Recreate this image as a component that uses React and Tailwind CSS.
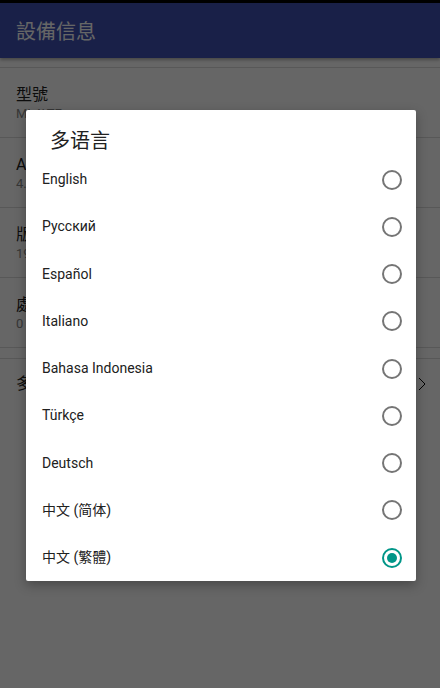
import React from "react";

const latin = { fontFamily: 'Roboto, "Noto Sans CJK TC", sans-serif' };
const sc = { fontFamily: 'Roboto, "Noto Sans CJK SC", sans-serif' };

const langs = [
  "English",
  "Русский",
  "Español",
  "Italiano",
  "Bahasa Indonesia",
  "Türkçe",
  "Deutsch",
  "中文 (简体)",
  "中文 (繁體)",
];

function Row({ title, sub }) {
  return (
    <div className="h-[70px] border-b border-[#dcdcdc] pl-4 pt-[2px] flex flex-col justify-center">
      <div className="text-[16px] leading-[20px] text-[#212121]">{title}</div>
      <div className="text-[13px] leading-[18px] text-[#8a8a8a]">{sub}</div>
    </div>
  );
}

export default function App() {
  return (
    <div className="relative w-[440px] h-[688px] overflow-hidden bg-white" style={latin}>
      <div className="h-[3px] bg-black" />
      <div className="h-[55px] bg-[#3f51b5] flex items-center pl-4 pt-[2px] shadow-[0_2px_3px_rgba(0,0,0,0.3)]">
        <span className="text-[20px] text-white">設備信息</span>
      </div>
      <div className="h-[10px] border-b border-[#dcdcdc]" />
      <Row title="型號" sub="MI 4LTE" />
      <Row title="Android 版本" sub="4.4.4" />
      <Row title="版本號" sub="19.0.1" />
      <Row title="處理器" sub="0" />
      <div className="h-[11px] border-b border-[#dcdcdc]" />
      <div className="h-[50px] flex items-center justify-between pl-4 pr-[14px]">
        <span className="text-[16px] text-[#212121]">多語言</span>
        <svg width="8" height="14" viewBox="0 0 8 14" fill="none">
          <path d="M1 1l6 6-6 6" stroke="#000" strokeWidth="1" />
        </svg>
      </div>

      <div className="absolute inset-0 bg-[rgba(0,0,0,0.6)]">
        <div className="mt-[110px] ml-[26px] w-[390px] h-[471px] bg-white rounded-[2px] shadow-[0_4px_12px_rgba(0,0,0,0.3)] flex flex-col">
          <div className="h-[46px] shrink-0 pt-[19px] pl-[24px] text-[20px] leading-[24px] text-[#212121]" style={sc}>
            多语言
          </div>
          {langs.map((l, i) => {
            const checked = i === langs.length - 1;
            return (
              <div key={l} className="h-[47.25px] shrink-0 flex items-center justify-between pl-4 pr-[14px]">
                <span className="text-[14px] text-[#212121]" style={i >= 7 ? sc : latin}>{l}</span>
                {checked ? (
                  <span className="w-[20px] h-[20px] rounded-full border-2 border-[#009688] flex items-center justify-center">
                    <span className="w-[10px] h-[10px] rounded-full bg-[#009688]" />
                  </span>
                ) : (
                  <span className="w-[20px] h-[20px] rounded-full border-2 border-[#757575]" />
                )}
              </div>
            );
          })}
        </div>
      </div>
    </div>
  );
}
